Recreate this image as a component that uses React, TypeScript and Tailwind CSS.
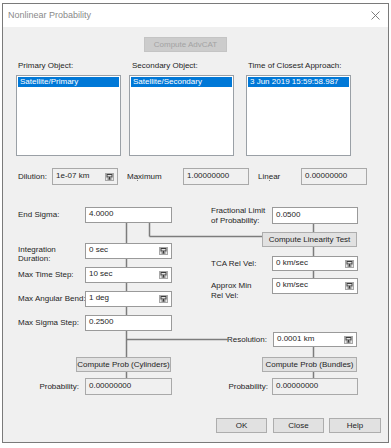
import clsx from 'clsx'

// unit picker glyph shown at the right end of the combo fields
function UnitIcon() {
  return (
    <svg width="9" height="8" viewBox="0 0 9 8" className="shrink-0">
      <rect x="0.5" y="0.5" width="8" height="7" fill="#e4e4e4" stroke="#a8a8a8" />
      <rect x="2" y="1.5" width="5" height="2.5" fill="none" stroke="#3c3c3c" />
      <rect x="4" y="4" width="1" height="2.5" fill="#3c3c3c" />
      <rect x="2.5" y="5.5" width="4" height="1" fill="#3c3c3c" />
    </svg>
  )
}

interface FieldProps {
  value: string
  className: string
  ro?: boolean
  combo?: boolean
}

function Field({ value, className, ro, combo }: FieldProps) {
  return (
    <div
      className={clsx(
        'flex items-center shrink-0 border pl-[3px] pr-[3px]',
        ro ? 'bg-[#f0f0f0] border-[#a9a9a9]' : 'bg-white border-[#9a9a9a]',
        className
      )}
    >
      <span className="flex-1 leading-[10px] -mt-[2px]">{value}</span>
      {combo && <UnitIcon />}
    </div>
  )
}

function Btn({ label, className, disabled }: { label: string; className: string; disabled?: boolean }) {
  return (
    <div
      className={clsx(
        'flex items-center justify-center shrink-0 border leading-none',
        disabled ? 'bg-[#cccccc] border-[#c4c4c4] text-[#a3a3a3]' : 'bg-[#e1e1e1] border-[#adadad]',
        className
      )}
    >
      {label}
    </div>
  )
}

function ListBox({ item }: { item: string }) {
  return (
    <div className="mt-[3px] h-[81px] bg-white border border-[#9aa0a6] p-[1px]">
      <div className="h-[10px] leading-[10px] bg-[#0078d7] text-white px-[2px] whitespace-nowrap">{item}</div>
    </div>
  )
}

const LINE = '#7c7c7c'

// connector segments, page coordinates
const segs: [number, number, number, number][] = [
  [126.5, 223, 126.5, 243],
  [126.5, 259, 126.5, 267],
  [126.5, 283, 126.5, 291],
  [126.5, 307, 126.5, 315],
  [126.5, 331, 126.5, 357],
  [126.5, 372, 126.5, 378],
  [149.5, 223, 149.5, 236.5],
  [149.5, 236.5, 262, 236.5],
  [126.5, 339.5, 229, 339.5],
  [313.5, 224, 313.5, 232],
  [313.5, 247, 313.5, 256],
  [313.5, 271, 313.5, 278],
  [313.5, 347, 313.5, 357],
  [313.5, 372, 313.5, 378],
]

export default function App() {
  return (
    <div className="relative w-[391px] h-[448px] bg-white pt-[3px] pl-[2px] overflow-hidden font-['Liberation_Sans',Arial,sans-serif] text-[8px] text-[#1e1e1e]">
      <div className="w-[387px] h-[440px] border border-[#7a7a7a] flex flex-col">
        {/* title bar */}
        <div className="h-[23px] bg-white flex items-center pl-[5px] pr-[8px] shrink-0">
          <span className="flex-1 text-[9px] text-[#8a8a8a]">Nonlinear Probability</span>
          <svg width="9" height="9" viewBox="0 0 9 9">
            <path d="M0.5 0.5 L8.5 8.5 M8.5 0.5 L0.5 8.5" stroke="#6f6f6f" strokeWidth="0.9" />
          </svg>
        </div>

        <div className="flex-1 bg-[#f0f0f0] flex flex-col">
          <Btn label="Compute AdvCAT" disabled className="mt-[10px] ml-[141px] w-[83px] h-[15px]" />

          {/* object lists */}
          <div className="flex mt-[8px] ml-[13px]">
            <div className="w-[105px]">
              <div className="h-[12px] leading-[12px] pl-[2px]">Primary Object:</div>
              <ListBox item="Satellite/Primary" />
            </div>
            <div className="w-[105px] ml-[8px]">
              <div className="h-[12px] leading-[12px] pl-[3px]">Secondary Object:</div>
              <ListBox item="Satellite/Secondary" />
            </div>
            <div className="w-[105px] ml-[12px]">
              <div className="h-[12px] leading-[12px] pl-[2px]">Time of Closest Approach:</div>
              <ListBox item="3 Jun 2019 15:59:58.987" />
            </div>
          </div>

          {/* dilution / results */}
          <div className="flex items-center h-[17px] mt-[12px]">
            <span className="ml-[15px] w-[34px]">Dilution:</span>
            <Field value="1e-07 km" ro combo className="w-[66px] h-[17px]" />
            <span className="relative ml-[9px] w-[56px]">
              Maximum
              <span className="absolute left-[10px] top-[9px] w-[1px] h-[1px] bg-[#888]" />
            </span>
            <Field value="1.00000000" ro className="w-[66px] h-[17px]" />
            <span className="relative ml-[9px] w-[43px]">
              Linear
              <span className="absolute left-[11px] top-[9px] w-[1px] h-[1px] bg-[#888]" />
            </span>
            <Field value="0.00000000" ro className="w-[66px] h-[17px]" />
          </div>

          <div className="flex mt-[22px]">
            {/* left column */}
            <div className="w-[200px] flex flex-col">
              <div className="flex items-center h-[16px] ml-[15px]">
                <span className="w-[67px]">End Sigma:</span>
                <Field value="4.0000" className="w-[87px] h-[16px]" />
              </div>
              <div className="flex items-center h-[16px] ml-[15px] mt-[20px]">
                <span className="w-[67px] leading-[9px] mt-[6px]">Integration<br />Duration:</span>
                <Field value="0 sec" combo className="w-[87px] h-[16px]" />
              </div>
              <div className="flex items-center h-[16px] ml-[15px] mt-[8px]">
                <span className="w-[67px]">Max Time Step:</span>
                <Field value="10 sec" combo className="w-[87px] h-[16px]" />
              </div>
              <div className="flex items-center h-[16px] ml-[15px] mt-[8px]">
                <span className="w-[67px] whitespace-nowrap">Max Angular Bend:</span>
                <Field value="1 deg" combo className="w-[87px] h-[16px]" />
              </div>
              <div className="flex items-center h-[16px] ml-[15px] mt-[8px]">
                <span className="w-[67px]">Max Sigma Step:</span>
                <Field value="0.2500" className="w-[87px] h-[16px]" />
              </div>
              <Btn label="Compute Prob (Cylinders)" className="mt-[26px] ml-[73px] w-[95px] h-[15px]" />
              <div className="flex items-center h-[17px] ml-[15px] mt-[6px]">
                <span className="w-[67px] text-right pr-[6px]">Probability:</span>
                <Field value="0.00000000" ro className="w-[87px] h-[17px]" />
              </div>
            </div>

            {/* right column */}
            <div className="flex-1 flex flex-col">
              <div className="flex items-center h-[17px] pl-[8px]">
                <span className="w-[61px] leading-[10px]">Fractional Limit<br />of Probability:</span>
                <Field value="0.0500" className="w-[86px] h-[17px]" />
              </div>
              <Btn label="Compute Linearity Test" className="mt-[8px] ml-[59px] w-[95px] h-[15px]" />
              <div className="flex items-center h-[15px] pl-[8px] mt-[9px]">
                <span className="w-[61px]">TCA Rel Vel:</span>
                <Field value="0 km/sec" combo className="w-[86px] h-[15px]" />
              </div>
              <div className="flex items-center h-[16px] pl-[8px] mt-[7px]">
                <span className="w-[61px] leading-[10px] mt-[9px]">Approx Min<br />Rel Vel:</span>
                <Field value="0 km/sec" combo className="w-[86px] h-[16px]" />
              </div>
              <div className="flex items-center h-[15px] mt-[38px]">
                <span className="w-[70px] text-right pr-[6px]">Resolution:</span>
                <Field value="0.0001 km" combo className="w-[84px] h-[15px]" />
              </div>
              <Btn label="Compute Prob (Bundles)" className="mt-[10px] ml-[59px] w-[95px] h-[15px]" />
              <div className="flex items-center h-[17px] mt-[6px]">
                <span className="w-[69px] text-right pr-[4px]">Probability:</span>
                <Field value="0.00000000" ro className="w-[86px] h-[17px]" />
              </div>
            </div>
          </div>

          {/* dialog buttons */}
          <div className="flex mt-[23px] ml-[213px]">
            <Btn label="OK" className="w-[51px] h-[15px]" />
            <Btn label="Close" className="ml-[6px] w-[51px] h-[15px]" />
            <Btn label="Help" className="ml-[5px] w-[52px] h-[15px]" />
          </div>
        </div>
      </div>

      <svg className="absolute inset-0 pointer-events-none" width="391" height="448">
        {segs.map(([x1, y1, x2, y2], i) => (
          <line key={i} x1={x1} y1={y1} x2={x2} y2={y2} stroke={LINE} strokeWidth="1.5" />
        ))}
      </svg>
    </div>
  )
}
